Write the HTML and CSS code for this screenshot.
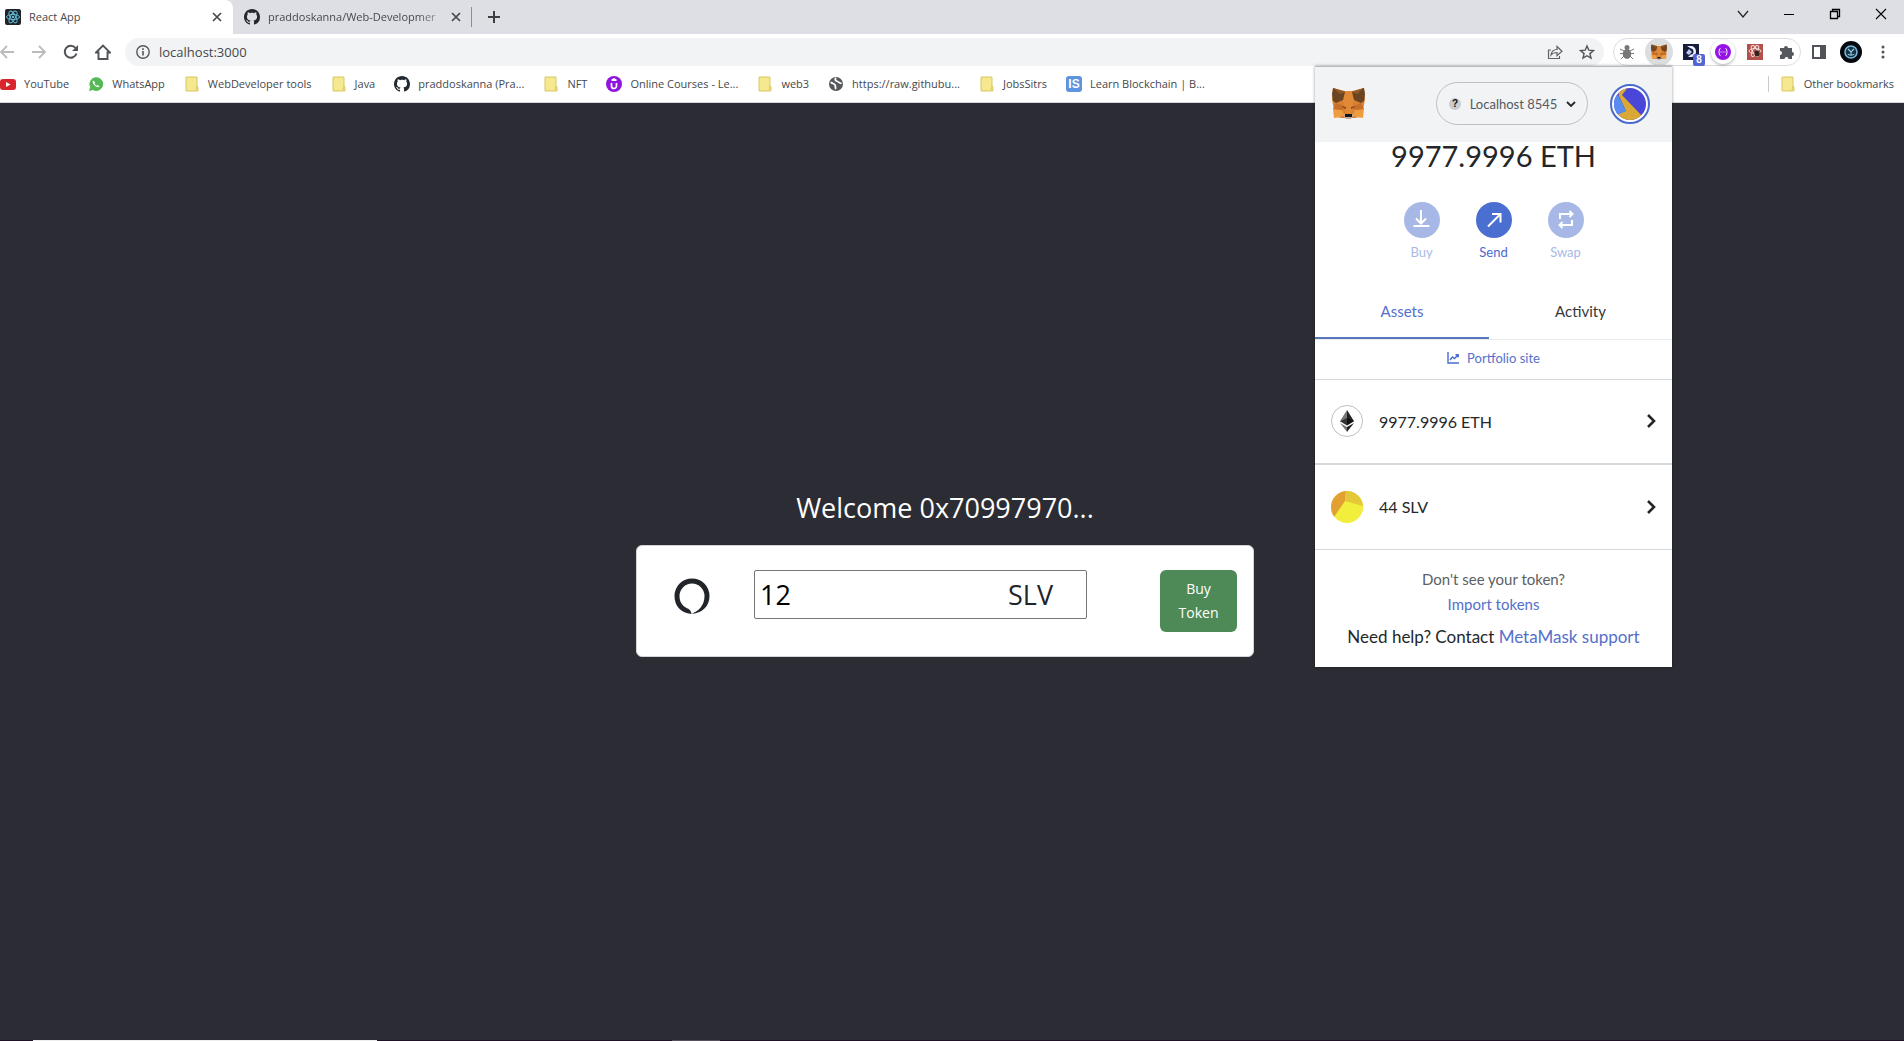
FILE: index.html
```html
<!DOCTYPE html>
<html lang="en">
<head>
<meta charset="utf-8">
<title>React App</title>
<link rel="stylesheet" href="styles.css">
</head>
<body>
<svg class="defs" aria-hidden="true">
  <symbol id="folder" viewBox="0 0 16 16"><path d="M2 1h11v9l1 1v4H2z" fill="#f6e88e" stroke="#d9c766"/><path d="M12 14l1-4" stroke="#d9c766" fill="none"/></symbol>
  <symbol id="github" viewBox="0 0 16 16"><path fill="#24292f" d="M8 0C3.58 0 0 3.58 0 8c0 3.54 2.29 6.53 5.47 7.59.4.07.55-.17.55-.38 0-.19-.01-.82-.01-1.49-2.01.37-2.53-.49-2.69-.94-.09-.23-.48-.94-.82-1.13-.28-.15-.68-.52-.01-.53.63-.01 1.08.58 1.23.82.72 1.21 1.87.87 2.33.66.07-.52.28-.87.51-1.07-1.78-.2-3.64-.89-3.64-3.95 0-.87.31-1.59.82-2.15-.08-.2-.36-1.02.08-2.12 0 0 .67-.21 2.2.82.64-.18 1.32-.27 2-.27s1.36.09 2 .27c1.53-1.04 2.2-.82 2.2-.82.44 1.1.16 1.92.08 2.12.51.56.82 1.27.82 2.15 0 3.07-1.87 3.75-3.65 3.95.29.25.54.73.54 1.48 0 1.07-.01 1.93-.01 2.2 0 .21.15.46.55.38A8 8 0 0 0 16 8c0-4.42-3.58-8-8-8z"/></symbol>
  <symbol id="fox" viewBox="0 0 33 31">
    <path fill="#d9812f" d="M1 0l12 3h7l12-3 1 11-2 11v6l-8 2h-4l-2 1h-2l-2-1h-4l-7-2v-6L0 11z"/>
    <path fill="#e08a38" d="M13 3h7l2 9-3 13h-5l-3-13z"/>
    <path fill="#6b4423" d="M1 0l12 4-2 8-7 3-3-2-1-7zM32 0L20 4l2 8 7 3 3-2 1-7z"/>
    <path fill="#8f5a2a" d="M1 0l12 4-5 2zM32 0L20 4l5 2z"/>
    <path fill="#ee9c40" d="M1 21l9 1 2 5-3 2-7 1zM32 21l-9 1-2 5 3 2 7 1z"/>
    <path fill="#c86e28" d="M4 15l8 3-2 4-9-1zM29 15l-8 3 2 4 9-1z"/>
    <path fill="#8a4f22" d="M10 18l4 1v2l-3-1zM23 18l-4 1v2l3-1z"/>
    <path fill="#c0ad9e" d="M11 27l2-1h7l2 1-3 4h-5z"/>
    <path fill="#161616" d="M13 26h7v3h-7z"/>
  </symbol>
  <symbol id="chev" viewBox="0 0 10 16"><path d="M2 2l6 6-6 6" fill="none" stroke="#24272a" stroke-width="2.6"/></symbol>
  <symbol id="cross" viewBox="0 0 10 10"><path d="M1 1l8 8M9 1L1 9" fill="none" stroke="#45484c" stroke-width="1.7"/></symbol>
</svg>

<header class="browser">
  <div class="tabstrip">
    <div class="tab tab-active">
      <svg class="i16" viewBox="0 0 16 16"><rect width="16" height="16" rx="2" fill="#20232a"/><g fill="none" stroke="#61b8d4"><ellipse cx="8" cy="8" rx="6.5" ry="2.6"/><ellipse cx="8" cy="8" rx="6.5" ry="2.6" transform="rotate(60 8 8)"/><ellipse cx="8" cy="8" rx="6.5" ry="2.6" transform="rotate(120 8 8)"/></g><circle cx="8" cy="8" r="1.3" fill="#61b8d4"/></svg>
      <span class="tab-title">React App</span>
      <button class="plain" aria-label="Close tab"><svg class="i10"><use href="#cross"/></svg></button>
    </div>
    <div class="tab tab-second">
      <svg class="i16"><use href="#github"/></svg>
      <span class="tab-title fade">praddoskanna/Web-Developmer</span>
      <button class="plain" aria-label="Close tab"><svg class="i10"><use href="#cross"/></svg></button>
    </div>
    <button class="plain newtab" aria-label="New tab"><svg class="i12" viewBox="0 0 12 12"><path d="M6 0v12M0 6h12" stroke="#3c4043" stroke-width="2"/></svg></button>
    <div class="winctl">
      <button class="plain" aria-label="Search tabs"><svg class="i12" viewBox="0 0 12 12"><path d="M1 3l5 6 5-6" fill="none" stroke="#222" stroke-width="1.2"/></svg></button>
      <button class="plain" aria-label="Minimize"><svg class="i12" viewBox="0 0 12 12"><path d="M1 6.5h10" stroke="#000"/></svg></button>
      <button class="plain" aria-label="Restore"><svg class="i12" viewBox="0 0 12 12"><path d="M1.500 3.500h7v7h-7zM3.500 3V1.500h7v7H9" fill="none" stroke="#000" stroke-width="1.300"/></svg></button>
      <button class="plain" aria-label="Close"><svg class="i12" viewBox="0 0 12 12"><path d="M1 1l10 10M11 1L1 11" stroke="#000" stroke-width="1.1"/></svg></button>
    </div>
  </div>

  <div class="toolbar">
    <div class="nav">
      <button class="plain" aria-label="Back"><svg class="i16" viewBox="0 0 16 16"><path d="M15 8H2M8 2L2 8l6 6" fill="none" stroke="#babcbe" stroke-width="1.800"/></svg></button>
      <button class="plain" aria-label="Forward"><svg class="i16" viewBox="0 0 16 16"><path d="M1 8h13M8 2l6 6-6 6" fill="none" stroke="#babcbe" stroke-width="1.800"/></svg></button>
      <button class="plain" aria-label="Reload"><svg class="i16" viewBox="0 0 16 16"><path d="M13.500 9.500A6 6 0 1 1 12.500 4" fill="none" stroke="#505357" stroke-width="2"/><path d="M15 1v6H9z" fill="#505357"/></svg></button>
      <button class="plain" aria-label="Home"><svg class="i16" viewBox="0 0 16 16"><path d="M1 8.500L8 1.500l7 7h-2.500V15h-9V8.500z" fill="none" stroke="#505357" stroke-width="1.900"/></svg></button>
    </div>
    <div class="omnibox">
      <svg class="i14" viewBox="0 0 14 14"><circle cx="7" cy="7" r="6.200" fill="none" stroke="#55585c" stroke-width="1.400"/><path d="M7 6v4.500M7 3.300v1.600" stroke="#55585c" stroke-width="1.600"/></svg>
      <input class="url" aria-label="Address" value="localhost:3000">
      <button class="plain" aria-label="Share"><svg class="i16" viewBox="0 0 16 16"><path d="M4 6H1.500v8.500h11V12M4 11c.5-4 3-5.500 6-5.500v-3l5 4.700-5 4.500V8.500C7 8.500 5.500 9 4 11z" fill="none" stroke="#5f6368" stroke-width="1.200"/></svg></button>
      <button class="plain" aria-label="Bookmark"><svg class="i16" viewBox="0 0 16 16"><path d="M8 2l1.800 4.200 4.700.4-3.600 3 1.100 4.500L8 11.700l-4 2.400 1.100-4.500-3.600-3 4.700-.4z" fill="none" stroke="#505357" stroke-width="1.400"/></svg></button>
    </div>
    <div class="extensions">
      <button class="plain" aria-label="Bug"><svg class="i16" viewBox="0 0 16 16"><path d="M1 5l4 2M15 5l-4 2M1 9.500h14M2 15l3-3M14 15l-3-3" stroke="#777" fill="none"/><circle cx="8" cy="3.500" r="2.500" fill="#777"/><ellipse cx="8" cy="10" rx="4.200" ry="5" fill="#777"/></svg></button>
      <button class="plain on" aria-label="MetaMask"><svg class="i16"><use href="#fox"/></svg></button>
      <button class="plain" aria-label="Dashboard, 8"><svg class="i16" viewBox="0 0 16 16"><path fill="#171c3d" d="M0 0h16v16H0z"/><path fill="#eef1ff" d="M4 2h4c3 0 5 2.500 5 5.500S11 13 8 13H5l3-2.500c2 0 2.500-1.500 2.500-3S9.500 4.500 8 4.500z"/><path d="M3 9l3-4 3 3-3 3z" fill="#b9c6f4"/></svg><span class="badge">8</span></button>
      <button class="plain raised" aria-label="Scripts"><svg class="i16" viewBox="0 0 16 16"><circle cx="8" cy="8" r="8" fill="#9613e6"/><path d="M5.500 4.500c-2 0-.5 3-2 3.500 1.500.5 0 3.500 2 3.500M10.500 4.500c2 0 .5 3 2 3.500-1.500.5 0 3.500-2 3.500" fill="none" stroke="#fff"/><path d="M5.500 8h1M7.500 8h1M9.500 8h1" stroke="#fff"/></svg></button>
      <button class="plain" aria-label="React tools"><svg class="i16" viewBox="0 0 16 16"><path fill="#b4504a" d="M0 0h16v16H0z"/><g fill="none" stroke="#f3dcda"><ellipse cx="8" cy="7" rx="6" ry="2.400"/><ellipse cx="8" cy="7" rx="6" ry="2.400" transform="rotate(60 8 7)"/><ellipse cx="8" cy="7" rx="6" ry="2.400" transform="rotate(120 8 7)"/></g><ellipse cx="10" cy="9.500" rx="2.600" ry="3" fill="#35201e"/></svg></button>
      <button class="plain" aria-label="Extensions"><svg class="i16" viewBox="0 0 16 16"><path fill="#55585c" d="M1 4h4a2 2 0 1 1 4 0h4v4a2 2 0 1 1 0 4v3H9.500a2 2 0 0 0-4 0H1v-4a2 2 0 0 0 0-4z"/></svg></button>
    </div>
    <div class="tail">
      <button class="plain" aria-label="Side panel"><svg class="i14" viewBox="0 0 14 14"><path d="M1 1h12v12H1z" fill="none" stroke="#505357" stroke-width="2"/><path d="M8 1h5v12H8z" fill="#505357"/></svg></button>
      <button class="plain" aria-label="Profile"><svg class="i22" viewBox="0 0 22 22"><circle cx="11" cy="11" r="11" fill="#03080f"/><circle cx="11" cy="11" r="6" fill="#14364d" stroke="#78b5d8" stroke-width="1.600"/><path d="M8 8l3 3 3-3M11 11v3M8 13c1 1.500 5 1.500 6 0" fill="none" stroke="#9fcbe2" stroke-width="1.100"/></svg></button>
      <button class="plain" aria-label="Menu"><svg class="i16" viewBox="0 0 16 16" fill="#505357"><circle cx="8" cy="3" r="1.500"/><circle cx="8" cy="8" r="1.500"/><circle cx="8" cy="13" r="1.500"/></svg></button>
    </div>
  </div>

  <nav class="bookmarks" aria-label="Bookmarks">
    <a href="#"><svg class="i16" viewBox="0 0 16 16"><rect y="3" width="16" height="11" rx="3" fill="#d9262c"/><path d="M6 6l4.500 2.500L6 11z" fill="#fff"/></svg>YouTube</a>
    <a href="#"><svg class="i16" viewBox="0 0 16 16"><path d="M1 15l1.200-4A6.800 6.800 0 1 1 5 14z" fill="#55b955"/><path d="M5.300 4.500c-1.500 1.500 0 3.500 1.500 5s3.500 2.500 4.700 1l-1.700-1.500-1 .8C7.600 9.200 7 8.500 6.600 7.500l.6-1z" fill="#fff"/></svg>WhatsApp</a>
    <a href="#"><svg class="i16"><use href="#folder"/></svg>WebDeveloper tools</a>
    <a href="#"><svg class="i16"><use href="#folder"/></svg>Java</a>
    <a href="#"><svg class="i16"><use href="#github"/></svg>praddoskanna (Pra...</a>
    <a href="#"><svg class="i16"><use href="#folder"/></svg>NFT</a>
    <a href="#"><svg class="i16" viewBox="0 0 16 16"><circle cx="8" cy="8" r="8" fill="#8f14e0"/><path d="M5.500 7v3a2.500 2.500 0 0 0 5 0V7M5.500 4.500L8 3l2.500 1.500" fill="none" stroke="#fff" stroke-width="1.700"/></svg>Online Courses - Le...</a>
    <a href="#"><svg class="i16"><use href="#folder"/></svg>web3</a>
    <a href="#"><svg class="i16" viewBox="0 0 16 16"><circle cx="8" cy="8" r="7" fill="#55585c"/><path d="M3 6c1 2 3 1 4 3s0 3 1 4M8 2c-2 2 0 3 1.500 3.500S12 8 13.500 7" fill="none" stroke="#fff" stroke-width="1.800"/></svg>https://raw.githubu...</a>
    <a href="#"><svg class="i16"><use href="#folder"/></svg>JobsSitrs</a>
    <a href="#"><span class="is">IS</span>Learn Blockchain | B...</a>
    <a class="other" href="#"><svg class="i16"><use href="#folder"/></svg>Other bookmarks</a>
  </nav>
</header>

<main class="page">
  <h1 class="welcome">Welcome 0x70997970...</h1>
  <form class="card">
    <svg class="spinner" viewBox="0 0 36 36"><path d="M17.500 35.900C6 35 .5 27 .5 18a17.500 17.500 0 1 1 35 0c0 9-6 17-18 17.900 6-2.400 13-7.500 13-17.900a12.500 12.500 0 1 0-25 0c0 6 3 10 7.500 12.200 2.500.8 4 2.500 4.500 5.700z" fill="#212529"/></svg>
    <label class="amount"><input class="amount-input" value="12" aria-label="Amount"><span>SLV</span></label>
    <button type="button" class="buy">Buy Token</button>
  </form>
</main>

<footer class="edge"><i class="edge-a"></i><i class="edge-b"></i></footer>

<aside class="wallet">
  <div class="w-head">
    <svg class="w-fox"><use href="#fox"/></svg>
    <button class="network"><span class="q">?</span>Localhost 8545<svg class="i10" viewBox="0 0 10 10"><path d="M1 3l4 4 4-4" fill="none" stroke="#24272a" stroke-width="1.800"/></svg></button>
    <button class="plain" aria-label="Account"><svg class="account" viewBox="0 0 40 40"><circle cx="20" cy="20" r="19" fill="#fff" stroke="#4a69cf" stroke-width="2"/><clipPath id="ac"><circle cx="20" cy="20" r="16"/></clipPath><g clip-path="url(#ac)"><path d="M0 0h40v40H0z" fill="#4a46d8"/><path d="M8 6l6-4h5l-7 9 20 21v8H5l0-9 11-4-7-15z" fill="#d9a835"/><path d="M8 11L0 14v17l5 1 11-5z" fill="#5a8cf0"/></g></svg></button>
  </div>
  <div class="balance">9977.9996 ETH</div>
  <div class="actions">
    <button class="action dim"><svg viewBox="0 0 36 36"><circle cx="18" cy="18" r="18"/><path d="M17 8v13M12 16.500l5 5 5-5M9.500 24h16"/></svg>Buy</button>
    <button class="action"><svg viewBox="0 0 36 36"><circle cx="18" cy="18" r="18"/><path d="M12 24.500L24.500 12M16 12h8.500v8.500"/></svg>Send</button>
    <button class="action dim"><svg viewBox="0 0 36 36"><circle cx="18" cy="18" r="18"/><path d="M12 17v-5h12M21.500 9l3 3-3 3M24 18v5H12M14.500 20l-3 3 3 3"/></svg>Swap</button>
  </div>
  <div class="w-tabs"><button class="w-tab selected">Assets</button><button class="w-tab">Activity</button></div>
  <a class="portfolio" href="#"><svg class="i12" viewBox="0 0 12 12"><path d="M1 0v11h11M3 8l2.500-3 2 1.500L11 3M8.500 2.700h2.700v2.500" fill="none" stroke="#4a69cf" stroke-width="1.400"/></svg>Portfolio site</a>
  <a class="asset thick" href="#"><svg class="i32" viewBox="0 0 32 32"><circle cx="16" cy="16" r="15.500" fill="#fff" stroke="#bbc0c5"/><path d="M16 5v12.500l-7-1.200z" fill="#777"/><path d="M16 5v12.500l7-1.200z" fill="#222"/><path d="M16 13v7.500l-7-4.200z" fill="#333"/><path d="M16 13v7.500l7-4.200z" fill="#111"/><path d="M9 18l7 4v5z" fill="#777"/><path d="M23 18l-7 4v5z" fill="#222"/></svg><span>9977.9996 ETH</span><svg class="go"><use href="#chev"/></svg></a>
  <a class="asset" href="#"><svg class="i32" viewBox="0 0 32 32"><clipPath id="sc"><circle cx="16" cy="16" r="16"/></clipPath><g clip-path="url(#sc)"><path d="M0 0h32v32H0z" fill="#f1ee3c"/><path d="M0 0h15l-1 10L3 26H0z" fill="#e2a032"/><path d="M15 0h17v15l-18-5z" fill="#e4c83a"/></g></svg><span>44 SLV</span><svg class="go"><use href="#chev"/></svg></a>
  <div class="w-foot">
    <p class="ask">Don't see your token?</p>
    <a href="#" class="import">Import tokens</a>
    <p class="help">Need help? Contact <a href="#">MetaMask support</a></p>
  </div>
</aside>
</body>
</html>
```
FILE: styles.css
```css
* { box-sizing: border-box; }
body {
  margin: 0;
  min-height: 100vh;
  display: flex;
  flex-direction: column;
  position: relative;
  overflow-x: hidden;
  background: #2c2c34;
  font-family: "Open Sans", "Noto Sans", sans-serif;
}
a { color: inherit; text-decoration: none; }
button, input { font: inherit; color: inherit; }
svg { display: block; flex: none; }
.defs { position: absolute; width: 0; height: 0; }
.plain { border: 0; background: none; padding: 0; display: grid; place-items: center; flex: none; }
.i10 { width: 10px; height: 10px; }
.i12 { width: 12px; height: 12px; }
.i14 { width: 14px; height: 14px; }
.i16 { width: 16px; height: 16px; }
.i22 { width: 22px; height: 22px; }
.i32 { width: 32px; height: 32px; }

.browser { background: #fff; color: #45484c; font-size: 11px; border-bottom: 1px solid #d5d7da; }
.tabstrip { display: flex; height: 34px; background: #dedfe4; }
.tab { display: flex; align-items: center; gap: 8px; padding-bottom: 1px; }
.tab-active { width: 233px; padding-left: 5px; padding-right: 11px; background: #fff; border-radius: 0 8px 0 0; }
.tab-second { width: 238px; padding-left: 11px; padding-right: 10px; }
.tab-title { flex: 1; min-width: 0; white-space: nowrap; }
.fade { -webkit-mask-image: linear-gradient(90deg, #000 85%, #0004); mask-image: linear-gradient(90deg, #000 85%, #0004); }
.newtab { width: 44px; border-left: 1px solid #8b8d91; height: 20px; margin-top: 7px; }
.winctl { margin-left: auto; display: flex; height: 28px; }
.winctl .plain { width: 46px; }

.toolbar { display: flex; align-items: center; height: 35px; }
.nav { display: flex; gap: 16px; width: 125px; padding-right: 14px; justify-content: flex-end; }
.omnibox { flex: 1; min-width: 0; display: flex; align-items: center; gap: 9px; height: 28px; padding: 0 9px 0 11px; border-radius: 14px; background: #f1f3f4; }
.omnibox .plain { margin-left: 7px; }
.url { flex: 1; min-width: 0; border: 0; padding: 0; outline: 0; background: none; font-size: 13px; line-height: 20px; color: #45484c; }
.extensions { display: flex; align-items: center; justify-content: center; width: 188px; height: 28px; margin-left: 9px; border: 1px solid #dadce0; border-radius: 14px; }
.extensions .plain { width: 28px; height: 28px; margin: 0 2px; position: relative; border-radius: 50%; }
.extensions .on { background: #dcddde; }
.extensions .raised { width: 24px; height: 24px; margin: 0 4px; box-shadow: 0 1px 3px #0005; }
.badge { position: absolute; right: 0; bottom: 0; width: 12px; height: 12px; border-radius: 2px; background: #5464d4; color: #fff; font: bold 10px/12px "Liberation Sans", sans-serif; text-align: center; }
.tail { display: flex; padding-left: 2px; padding-right: 5px; }
.tail .plain { width: 32px; height: 28px; }

.bookmarks { display: flex; align-items: center; gap: 19px; height: 33px; padding-bottom: 4px; white-space: nowrap; }
.bookmarks a { display: flex; align-items: center; gap: 8px; }
.bookmarks .other { margin-left: auto; padding-left: 11px; padding-right: 10px; border-left: 1px solid #c8cacd; }
.is { width: 16px; height: 16px; border-radius: 3px; background: #5e93dd; color: #fff; font: bold 12px/16px "Liberation Sans", sans-serif; text-align: center; }

.page { flex: 1; display: flex; flex-direction: column; align-items: center; justify-content: center; padding: 4px 14px 0 0; }
.welcome { margin: 0 0 20px; color: #fff; font-size: 27px; line-height: 34px; font-weight: 400; }
.card { display: flex; align-items: flex-start; width: 618px; max-width: 100%; padding: 24px 16px; height: 112px; background: #fff; border: 1px solid #d3d4d6; border-radius: 6px; }
.spinner { width: 36px; height: 36px; margin: 8px 44px 0 21px; }
.amount { display: flex; align-items: center; width: 333px; height: 49px; padding: 0 33px 0 5px; border: 1px solid #767676; border-radius: 2px; font-size: 27px; color: #212529; }
.amount-input { flex: 1; min-width: 0; border: 0; outline: 0; padding: 0; background: none; color: #000; }
.buy { width: 77px; margin-left: auto; padding: 7px 12px; border: 0; border-radius: 6px; background: #4e8a57; color: #fff; font-size: 14px; line-height: 24px; }

.edge { display: flex; height: 1px; background: #1d1226; }
.edge-a { width: 344px; margin-left: 33px; background: #eee; }
.edge-b { width: 48px; margin-left: 295px; background: #55505c; }

.wallet { position: absolute; top: 66px; right: 232px; width: 357px; background: #fff; color: #24272a; font-family: Lato, sans-serif; border-top: 1px solid #b9babc; box-shadow: 0 0 3px #0006; }
.w-head { display: flex; align-items: center; height: 75px; padding: 0 22px 2px 17px; background: #f2f3f4; }
.w-fox { width: 33px; height: 31px; }
.network { display: flex; align-items: center; justify-content: space-between; width: 152px; height: 43px; margin: 0 22px 0 auto; padding: 0 11px 0 12px; border: 1px solid #bbc0c5; border-radius: 22px; background: none; font-size: 13px; color: #535a61; }
.q { width: 12px; height: 12px; border-radius: 50%; background: #c9ccd0; color: #111; font: bold 10px/12px "Liberation Sans", sans-serif; }
.account { width: 40px; height: 40px; }
.balance { font-size: 29px; line-height: 28px; height: 60px; text-align: center; }
.actions { display: flex; justify-content: center; }
.action { width: 72px; border: 0; padding: 0; background: none; font-size: 13px; line-height: 18px; color: #4a69cf; }
.action svg { width: 36px; height: 36px; margin: 0 auto 5px; fill: #4a6fd0; }
.action path { fill: none; stroke: #fff; stroke-width: 2; }
.action.dim { color: #a9b9e4; }
.action.dim svg { fill: #a7b8e6; }
.w-tabs { display: flex; margin-top: 24px; border-bottom: 1px solid #e8e9ea; }
.w-tab { flex: 1; height: 54px; border: 0; background: none; padding: 0; font-size: 15px; color: #35383b; border-bottom: 2px solid transparent; }
.w-tab.selected { flex: 0 0 174px; color: #5470ca; border-color: #5878bb; }
.portfolio { display: flex; align-items: center; justify-content: center; gap: 8px; height: 40px; padding-bottom: 3px; border-bottom: 1px solid #d6d9dc; font-size: 13px; color: #5470ca; }
.asset { display: flex; align-items: center; gap: 16px; height: 85px; padding: 0 16px 1px; border-bottom: 1px solid #d6d9dc; font-size: 16px; }
.asset.thick { border-bottom-width: 2px; }
.go { width: 10px; height: 16px; margin-left: auto; }
.w-foot { display: flex; flex-direction: column; align-items: center; padding: 17px 0 18px; font-size: 15px; }
.w-foot p { margin: 0; }
.ask { color: #5b6065; line-height: 24px; }
.import { color: #5470ca; line-height: 26px; }
.w-foot .help { margin-top: 8px; font-size: 17px; line-height: 24px; }
.help a { color: #5470ca; }
```
